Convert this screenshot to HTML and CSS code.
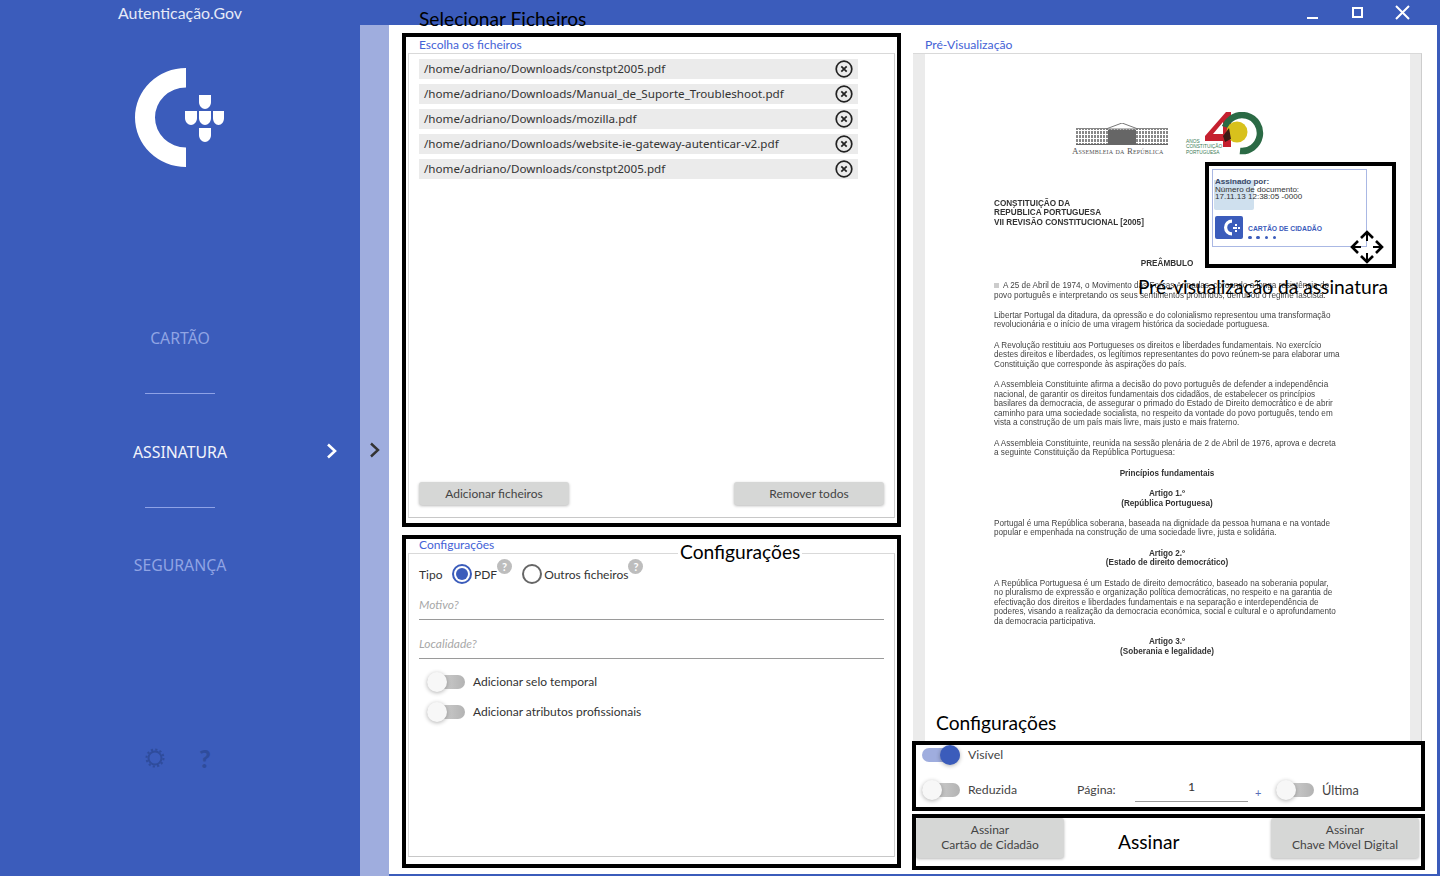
FILE: index.html
```html
<!DOCTYPE html>
<html lang="pt">
<head>
<meta charset="utf-8">
<title>Autenticação.Gov</title>
<link rel="stylesheet" href="styles.css">
</head>
<body>
<div class="app">
  <aside class="sidebar">
    <div class="app-title">Autenticação.Gov</div>
    <svg class="logo" width="90" height="100" viewBox="0 0 90 100">
      <path fill="#fff" d="M51 0A51 49.500 0 0 0 51 99V79.500A31 30 0 0 1 51 19.500Z"/>
      <g fill="#fff">
        <path d="M64 27H76V34C76 38 73 41 70 41S64 38 64 34Z"/>
        <path d="M50 43H62V50C62 54 59 57 56 57S50 54 50 50Z"/>
        <path d="M64 43H76V50C76 54 73 57 70 57S64 54 64 50Z"/>
        <path d="M78 43H89V50C89 54 86.500 57 83.500 57S78 54 78 50Z"/>
        <path d="M64 60H76V67C76 71 73 74 70 74S64 71 64 67Z"/>
      </g>
    </svg>
    <nav class="nav">
      <div class="nav-item">CARTÃO</div>
      <div class="nav-rule"></div>
      <div class="nav-item nav-item-active">ASSINATURA
        <svg class="nav-chevron" width="12" height="16" viewBox="0 0 12 16"><path d="M2 1.500L9 8 2 14.500" fill="none" stroke="#fff" stroke-width="2.600"/></svg>
      </div>
      <div class="nav-rule"></div>
      <div class="nav-item">SEGURANÇA</div>
    </nav>
    <div class="side-tools">
      <svg width="20" height="20" viewBox="0 0 20 20">
        <circle cx="10" cy="10" r="6.500" fill="none" stroke="#2f4c9c" stroke-width="2"/>
        <circle cx="10" cy="10" r="8.500" fill="none" stroke="#2f4c9c" stroke-width="2" stroke-dasharray="2.200 2.250"/>
      </svg>
      <span class="tool-help">?</span>
    </div>
  </aside>

  <div class="workspace">
    <header class="titlebar">
      <svg class="win-min" width="11" height="2" viewBox="0 0 11 2"><rect width="11" height="2" fill="#fff"/></svg>
      <svg class="win-max" width="11" height="11" viewBox="0 0 11 11"><rect x="1" y="1" width="9" height="9" fill="none" stroke="#fff" stroke-width="2"/></svg>
      <svg class="win-close" width="15" height="15" viewBox="0 0 15 15"><path d="M1 1L14 14M14 1L1 14" stroke="#fff" stroke-width="2"/></svg>
    </header>
    <div class="body">
      <div class="strip">
        <svg width="12" height="16" viewBox="0 0 12 16"><path d="M2 1.500L9 8 2 14.500" fill="none" stroke="#333" stroke-width="2.400"/></svg>
      </div>
      <main class="main">
        <div class="col-left">
          <section class="box box-files">
            <h2 class="note note-files">Selecionar Ficheiros</h2>
            <div class="legend">Escolha os ficheiros</div>
            <div class="panel panel-files">
              <ul class="file-list">
                <li class="file-row"><span>/home/adriano/Downloads/constpt2005.pdf</span><svg class="x-icon" viewBox="0 0 18 18"><circle cx="9" cy="9" r="7.800"/><path d="M6.300 6.300L11.700 11.700M11.700 6.300L6.300 11.700"/></svg></li>
                <li class="file-row"><span>/home/adriano/Downloads/Manual_de_Suporte_Troubleshoot.pdf</span><svg class="x-icon" viewBox="0 0 18 18"><circle cx="9" cy="9" r="7.800"/><path d="M6.300 6.300L11.700 11.700M11.700 6.300L6.300 11.700"/></svg></li>
                <li class="file-row"><span>/home/adriano/Downloads/mozilla.pdf</span><svg class="x-icon" viewBox="0 0 18 18"><circle cx="9" cy="9" r="7.800"/><path d="M6.300 6.300L11.700 11.700M11.700 6.300L6.300 11.700"/></svg></li>
                <li class="file-row"><span>/home/adriano/Downloads/website-ie-gateway-autenticar-v2.pdf</span><svg class="x-icon" viewBox="0 0 18 18"><circle cx="9" cy="9" r="7.800"/><path d="M6.300 6.300L11.700 11.700M11.700 6.300L6.300 11.700"/></svg></li>
                <li class="file-row"><span>/home/adriano/Downloads/constpt2005.pdf</span><svg class="x-icon" viewBox="0 0 18 18"><circle cx="9" cy="9" r="7.800"/><path d="M6.300 6.300L11.700 11.700M11.700 6.300L6.300 11.700"/></svg></li>
              </ul>
              <div class="file-actions">
                <button class="btn btn-file">Adicionar ficheiros</button>
                <button class="btn btn-file">Remover todos</button>
              </div>
            </div>
          </section>

          <section class="box box-config">
            <h2 class="note note-config">Configurações</h2>
            <div class="legend legend-config">Configurações</div>
            <div class="panel panel-config">
              <div class="type-row">
                <span class="type-label">Tipo</span>
                <span class="radio radio-on"></span>
                <span class="type-name">PDF</span><span class="help">?</span>
                <span class="radio radio-off"></span>
                <span class="type-name">Outros ficheiros</span><span class="help">?</span>
              </div>
              <div class="field field-first">Motivo?</div>
              <div class="field">Localidade?</div>
              <div class="opt-row opt-first"><span class="switch"></span><span class="opt-text">Adicionar selo temporal</span></div>
              <div class="opt-row"><span class="switch"></span><span class="opt-text">Adicionar atributos profissionais</span></div>
            </div>
          </section>
        </div>

        <div class="col-right">
          <section class="preview">
            <div class="legend legend-preview">Pré-Visualização</div>
            <div class="preview-frame">
              <div class="page">
                <div class="pdf-head">
                  <div class="parliament">
                    <svg width="92" height="22" viewBox="0 0 92 22">
                      <defs><pattern id="win" width="3" height="4" patternUnits="userSpaceOnUse"><rect width="2" height="3" fill="#888"/></pattern></defs>
                      <rect x="0" y="6" width="92" height="15" fill="url(#win)"/>
                      <rect x="0" y="5" width="92" height="1" fill="#888"/>
                      <rect x="0" y="21" width="92" height="1" fill="#666"/>
                      <rect x="32" y="7" width="28" height="14" fill="#666"/>
                      <path d="M30 6L46 0 62 6Z" fill="#fff" stroke="#777"/>
                    </svg>
                    <div class="parliament-name">Assembleia da República</div>
                  </div>
                  <div class="anniv">
                    <div class="anniv-text">ANOS<br>CONSTITUIÇÃO<br>PORTUGUESA</div>
                    <svg width="60" height="44" viewBox="0 0 60 44">
                      <path d="M21 0L0 24V29H18V35H26V0Z M18 10V22H8Z" fill="#c5202f" fill-rule="evenodd"/>
                      <path d="M20 15A18 18 0 1 1 35 39" fill="none" stroke="#2b6a45" stroke-width="6.500"/>
                      <circle cx="32" cy="20" r="10.500" fill="#d8c11c"/>
                      <path d="M24 16L26 27 20 30 18 24Z" fill="#3a1a16"/>
                    </svg>
                  </div>
                </div>
                <div class="pdf-text">
                  <h3 class="pdf-title">CONSTITUIÇÃO DA<br>REPÚBLICA PORTUGUESA<br>VII REVISÃO CONSTITUCIONAL [2005]</h3>
                  <h4 class="pdf-head-center pdf-preamble">PREÂMBULO</h4>
                  <p class="pdf-first"><span class="pdf-mark"></span>A 25 de Abril de 1974, o Movimento das Forças Armadas, coroando a longa resistência do<br>povo português e interpretando os seus sentimentos profundos, derrubou o regime fascista.</p>
                  <p>Libertar Portugal da ditadura, da opressão e do colonialismo representou uma transformação<br>revolucionária e o início de uma viragem histórica da sociedade portuguesa.</p>
                  <p>A Revolução restituiu aos Portugueses os direitos e liberdades fundamentais. No exercício<br>destes direitos e liberdades, os legítimos representantes do povo reúnem-se para elaborar uma<br>Constituição que corresponde às aspirações do país.</p>
                  <p>A Assembleia Constituinte afirma a decisão do povo português de defender a independência<br>nacional, de garantir os direitos fundamentais dos cidadãos, de estabelecer os princípios<br>basilares da democracia, de assegurar o primado do Estado de Direito democrático e de abrir<br>caminho para uma sociedade socialista, no respeito da vontade do povo português, tendo em<br>vista a construção de um país mais livre, mais justo e mais fraterno.</p>
                  <p>A Assembleia Constituinte, reunida na sessão plenária de 2 de Abril de 1976, aprova e decreta<br>a seguinte Constituição da República Portuguesa:</p>
                  <h4 class="pdf-head-center">Princípios fundamentais</h4>
                  <h4 class="pdf-head-center">Artigo 1.º<br>(República Portuguesa)</h4>
                  <p>Portugal é uma República soberana, baseada na dignidade da pessoa humana e na vontade<br>popular e empenhada na construção de uma sociedade livre, justa e solidária.</p>
                  <h4 class="pdf-head-center">Artigo 2.º<br>(Estado de direito democrático)</h4>
                  <p>A República Portuguesa é um Estado de direito democrático, baseado na soberania popular,<br>no pluralismo de expressão e organização política democráticas, no respeito e na garantia de<br>efectivação dos direitos e liberdades fundamentais e na separação e interdependência de<br>poderes, visando a realização da democracia económica, social e cultural e o aprofundamento<br>da democracia participativa.</p>
                  <h4 class="pdf-head-center">Artigo 3.º<br>(Soberania e legalidade)</h4>
                </div>

                <div class="sig-box">
                  <div class="sig-rect">
                    <div class="sig-water"></div>
                    <div class="sig-lines"><b>Assinado por:</b><br>Número de documento:<br>17.11.13 12:38:05 -0000</div>
                    <div class="sig-card">
                      <svg width="28" height="23" viewBox="0 0 28 23"><rect width="28" height="23" rx="2" fill="#3b5cbb"/><path fill="#fff" d="M17 3.500A8 8 0 0 0 17 19.500V16.300A4.800 4.800 0 0 1 17 6.700Z"/><path fill="#fff" d="M20 8h2v2h-2zM18 11h2v2h-2zM20 11h2v2h-2zM23 11h2v2h-2zM20 14h2v2h-2z"/></svg>
                      <div class="sig-card-text">CARTÃO DE CIDADÃO<div class="sig-dots"><i></i><i></i><i></i><i></i></div></div>
                    </div>
                  </div>
                  <svg class="sig-move" width="34" height="34" viewBox="0 0 34 34">
                    <path d="M17 3V11M17 23V31M3 17H11M23 17H31" stroke="#000" stroke-width="2" fill="none"/>
                    <path d="M11 8L17 2 23 8M11 26L17 32 23 26M8 11L2 17 8 23M26 11L32 17 26 23" stroke="#000" stroke-width="2.600" fill="none"/>
                  </svg>
                </div>
                <h2 class="note note-sig">Pré-visualização da assinatura</h2>
                <h2 class="note note-preview">Configurações</h2>
              </div>
            </div>
          </section>

          <section class="box box-sign-opts">
            <div class="sign-row">
              <span class="switch switch-on"></span><span class="sign-label">Visível</span>
            </div>
            <div class="sign-row sign-row-second">
              <span class="switch"></span><span class="sign-label sign-reduzida">Reduzida</span>
              <span class="sign-label sign-page">Página:</span>
              <span class="page-input">1</span>
              <span class="page-plus">+</span>
              <span class="switch"></span><span class="sign-label sign-last">Última</span>
            </div>
          </section>

          <section class="box box-sign">
            <button class="btn btn-sign">Assinar<br>Cartão de Cidadão</button>
            <h2 class="note note-assinar">Assinar</h2>
            <button class="btn btn-sign btn-sign-right">Assinar<br>Chave Móvel Digital</button>
          </section>
        </div>
      </main>
    </div>
  </div>
</div>
</body>
</html>
```
FILE: styles.css
```css
* { box-sizing: border-box; }
html, body { margin: 0; padding: 0; height: 100%; }
body { font-family: "Lato", "Liberation Sans", sans-serif; font-size: 12px; color: #333; overflow: hidden; background: #fff; }
.app { display: flex; width: 1440px; height: 876px; }

/* sidebar */
.sidebar { width: 360px; flex: none; background: #3b5cbb; display: flex; flex-direction: column; align-items: center; position: relative; }
.app-title { height: 25px; margin-top: 3px; font-size: 15.900px; line-height: 20px; color: #e6eaf7; }
.logo { margin-top: 40px; display: block; }
.nav { margin-top: 154px; width: 100%; display: flex; flex-direction: column; align-items: center; }
.nav-item { position: relative; width: 100%; height: 30px; line-height: 32px; text-align: center; font-family: "Noto Sans", sans-serif; font-size: 15.800px; color: #90a4e4; }
.nav-item-active { color: #f2f4fb; }
.nav-chevron { position: absolute; left: 326px; top: 7px; }
.nav-rule { width: 70px; height: 1px; background: #8ea2e6; margin: 41px 0 41.500px; }
.side-tools { margin-top: auto; margin-bottom: 108px; width: 70px; display: flex; justify-content: space-between; align-items: center; height: 20px; padding-right: 4px; }
.tool-help { font-size: 25px; font-weight: 900; color: #2f4c9c; line-height: 20px; }

/* workspace */
.workspace { flex: 1; display: flex; flex-direction: column; min-width: 0; }
.titlebar { height: 25px; flex: none; background: #3b5cbb; display: flex; align-items: flex-start; padding-left: 947px; }
.win-min { margin-top: 17px; }
.win-max { margin-top: 7px; margin-left: 34px; }
.win-close { margin-top: 5px; margin-left: 32px; }
.body { flex: 1; display: flex; min-height: 0; }
.strip { width: 29px; flex: none; background: #9fadde; display: flex; justify-content: center; padding-top: 417px; padding-left: 1px; }
.strip svg { display: block; }
.main { flex: 1; display: flex; padding: 8px 0 0 13px; border-right: 3px solid #3b5cbb; border-bottom: 2px solid #3b5cbb; min-width: 0; }

/* columns */
.col-left { width: 499px; flex: none; display: flex; flex-direction: column; gap: 8px; }
.col-right { width: 513px; margin-left: 11px; flex: none; display: flex; flex-direction: column; }

.box { position: relative; border: 4px solid #000; background: #fff; }
.box-files { height: 494px; padding: 0 2px; }
.box-config { height: 333px; padding: 0 2px; }
.legend { height: 16px; padding-left: 11px; font-size: 12px; line-height: 16px; color: #4462d6; }
.legend-config { height: 14px; line-height: 12px; }
.panel { border: 1px solid #d9d9d9; border-right-color: #cfcfcf; border-bottom-color: #c8c8c8; background: #fff; }
.panel-files { height: 465px; padding: 5px 10px 12px; display: flex; flex-direction: column; }
.panel-config { height: 304px; padding: 10px 10px; }

.note { position: absolute; margin: 0; font-family: "Lato", sans-serif; font-weight: 400; font-size: 19.200px; line-height: 24px; color: #000; white-space: nowrap; }
.note-files { left: 13px; top: -30px; }
.note-config { left: 272px; top: 1px; background: #fff; padding: 0 2px; }
.note-sig { left: 213px; top: 221px; }
.note-preview { left: 11px; top: 656.500px; }
.note-assinar { position: static; align-self: center; margin-left: 54px; }

/* file list */
.file-list { list-style: none; margin: 0; padding: 0; width: 439px; display: flex; flex-direction: column; gap: 5px; }
.file-row { height: 20px; background: #ebebeb; display: flex; align-items: center; justify-content: space-between; padding: 0 5.500px 0 5px; font-family: "Noto Sans", sans-serif; font-size: 11.650px; color: #333; white-space: nowrap; }
.file-row span { padding-bottom: 2px; }
.x-icon { width: 18px; height: 18px; fill: none; stroke: #222; stroke-width: 1.700; flex: none; }
.file-actions { margin-top: auto; display: flex; justify-content: space-between; width: 465px; }
.btn { border: 0; border-radius: 3px; background: #d6d7d6; color: #444; font-family: "Lato", sans-serif; font-size: 12px; box-shadow: 0 1px 3px rgba(0,0,0,.28); padding: 0; }
.btn-file { width: 150px; height: 23px; padding-bottom: 1px; }

/* config */
.type-row { display: flex; align-items: center; height: 20px; }
.type-label { width: 33px; }
.radio { width: 20px; height: 20px; border-radius: 50%; flex: none; background: #fff; }
.radio-on { border: 2px solid #3b5cbb; position: relative; }
.radio-on::after { content: ""; position: absolute; inset: 2px; border-radius: 50%; background: #3b5cbb; }
.radio-off { border: 2px solid #666; margin-left: 10px; }
.type-name { margin-left: 2px; }
.help { width: 15px; height: 15px; border-radius: 50%; background: #bdbdbd; color: #fff; font-size: 11px; font-weight: 700; line-height: 15px; text-align: center; align-self: flex-start; margin-top: -5px; flex: none; }
.field { height: 26px; margin-top: 13px; border-bottom: 1px solid #9a9a9a; width: 465px; color: #a8a8a8; font-style: italic; line-height: 22px; font-size: 12px; }
.field-first { height: 36px; padding-top: 12px; margin-top: 0; line-height: 18px; }
.opt-row { display: flex; align-items: center; gap: 8px; height: 20px; padding-left: 8px; margin-top: 10px; color: #333; }
.opt-text { padding-bottom: 1px; }
.opt-first { margin-top: 13px; }

.switch { position: relative; width: 38px; height: 20px; flex: none; display: inline-block; }
.switch::before { content: ""; position: absolute; left: 0; right: 0; top: 3px; height: 14px; border-radius: 7px; background: linear-gradient(90deg, #dcdcdc, #b3b3b3); }
.switch::after { content: ""; position: absolute; left: 0; top: 0; width: 20px; height: 20px; border-radius: 50%; background: #f7f7f7; box-shadow: 0 1px 4px rgba(0,0,0,.3); }
.switch-on::before { background: #9fadde; }
.switch-on::after { left: auto; right: 0; background: #3b5cbb; }

/* preview */
.preview { height: 708px; position: relative; display: flex; flex-direction: column; }
.legend-preview { height: 20px; line-height: 22px; padding-left: 13px; padding-top: 1px; color: #4462d6; font-size: 12.200px; }
.preview-frame { margin-left: 1px; width: 509px; height: 688px; border-top: 1px solid #d9d9d9; border-right: 1px solid #cdcdcd; background: #ebebeb; padding: 0 11px 0 12px; }
.page { position: relative; height: 100%; background: #fff; overflow: visible; padding: 58px 0 0 0; }
.pdf-head { display: flex; height: 44px; padding-left: 147px; }
.parliament { width: 114px; padding-top: 11px; padding-left: 4px; }
.parliament svg { display: block; }
.parliament-name { margin-left: -4px; margin-top: 2px; font-family: "Liberation Serif", serif; font-variant: small-caps; font-size: 8.900px; line-height: 9px; color: #555; white-space: nowrap; letter-spacing: .15px; }
.anniv { display: flex; position: relative; }
.anniv-text { width: 19px; padding-top: 27px; font-size: 4.800px; line-height: 5.300px; color: #3a7b56; white-space: nowrap; font-family: "Liberation Sans", sans-serif; }
.pdf-text { margin: 42.500px 0 0 69px; width: 346px; font-family: "Liberation Sans", sans-serif; font-size: 8.170px; line-height: 9.500px; color: #444; white-space: nowrap; filter: blur(.25px); }
.pdf-text p { margin: 10.900px 0 0; }
.pdf-text p.pdf-first { margin-top: 13px; }
.pdf-title { margin: 0; font-size: 8.170px; font-weight: 700; color: #333; }
.pdf-head-center { margin: 11px 0 0; text-align: center; font-size: 8.170px; font-weight: 700; color: #333; }
.pdf-preamble { margin-top: 31.500px; }
.pdf-mark { display: inline-block; width: 5px; height: 5px; background: #ccc; margin-right: 4px; }

/* signature */
.sig-box { position: absolute; left: 280px; top: 108px; width: 191px; height: 106px; border: 4px solid #000; background: #fff; }
.sig-rect { position: absolute; left: 3px; top: 3px; width: 155px; height: 78px; border: 1px solid #aab8e4; font-family: "Liberation Sans", sans-serif; font-size: 8.050px; line-height: 7.500px; color: #444; }
.sig-water { position: absolute; left: 1px; top: 10px; width: 40px; height: 30px; background: #cfe0ee; border-radius: 0 0 2px 2px; }
.sig-lines { position: relative; padding: 8px 0 0 2px; white-space: nowrap; color: #333; }
.sig-lines b { color: #3a4a6a; }
.sig-card { position: absolute; left: 2px; top: 46px; display: flex; gap: 5px; }
.sig-card svg { display: block; }
.sig-card-text { font-size: 6.800px; font-weight: 700; color: #3b5cbb; line-height: 8px; padding-top: 9px; white-space: nowrap; }
.sig-dots { display: flex; gap: 4.800px; margin-top: 2.500px; }
.sig-dots i { width: 3.500px; height: 3.500px; border-radius: 50%; background: #3b5cbb; display: block; }
.sig-move { position: absolute; left: 141px; top: 64px; }

/* signing options */
.box-sign-opts { height: 70px; padding: 0 0 0 6px; font-size: 12.300px; }
.sign-row { display: flex; align-items: center; height: 20px; }
.sign-row-second { margin-top: 15px; }
.sign-label { color: #444; margin-left: 8px; padding-bottom: 1px; }
.sign-reduzida { width: 101px; }
.sign-page { margin-left: 8px; width: 58px; }
.page-input { width: 113px; height: 22px; margin-top: 2px; border-bottom: 1px solid #9a9a9a; text-align: center; line-height: 14px; }
.page-plus { margin: 4px 16px 0 7px; font-size: 11px; color: #5a6fb8; width: 5px; }
.sign-last { font-size: 12.700px; }

.box-sign { height: 56px; margin-top: 3px; display: flex; align-items: flex-start; width: 513px; }
.btn-sign { width: 148px; height: 40px; line-height: 15px; font-size: 12px; padding-bottom: 2px; }
.btn-sign-right { margin-left: auto; margin-right: 2px; }
```
